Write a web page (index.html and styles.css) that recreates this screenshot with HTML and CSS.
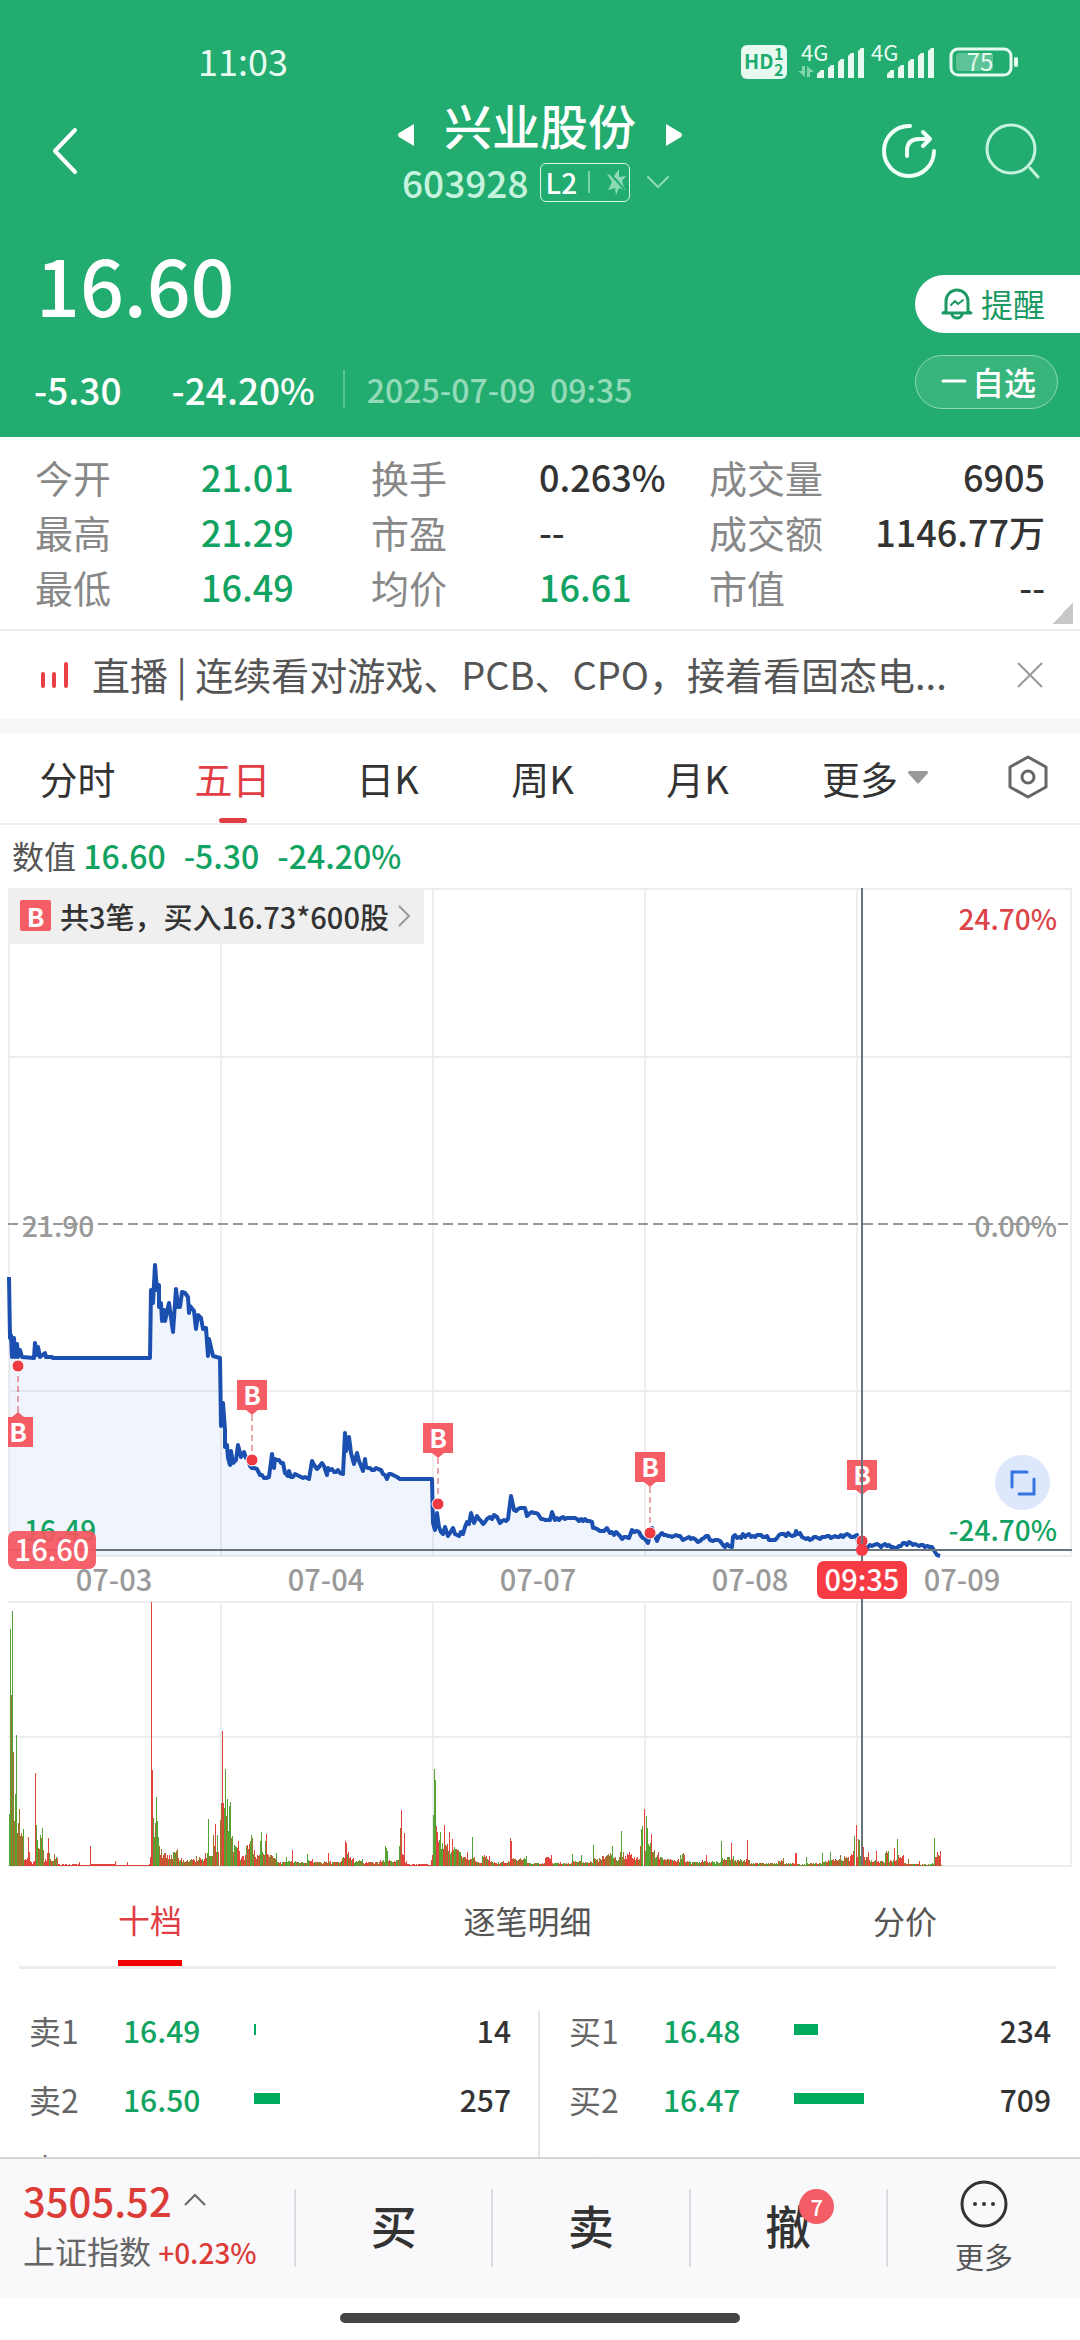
FILE: index.html
```html
<!DOCTYPE html>
<html lang="zh-CN">
<head>
  <meta charset="UTF-8" />
  <meta name="viewport" content="width=device-width, initial-scale=1.0"/>
  <title>兴业股份 603928</title>
  <link rel="stylesheet" href="styles.css">
</head>
<body>
  <main class="page">
    <header class="header">
      <div class="status-bar">
        <span class="clock">11:03</span>
        <svg class="status-icons" viewBox="0 0 280 36" width="280" height="36">
          <rect x="1" y="1" width="46" height="34" rx="6" fill="#e6faf0"/>
          <g fill="#22ac70" font-weight="700">
            <text x="4" y="25" font-size="20">HD</text>
            <text x="34" y="16" font-size="16">1</text>
            <text x="34" y="32" font-size="16">2</text>
          </g>
          <g fill="#e6faf0">
            <text x="61" y="17" font-size="22">4G</text>
            <text x="131" y="17" font-size="22">4G</text>
            <path d="M77 34v-4l4-4h3v8zM88 34v-10l3-3h3v13zM98 34v-16l3-3h3v19zM108 34v-22l3-3h3v25zM118 34v-27l3-3h3v30z"/>
            <path d="M147 34v-4l4-4h3v8zM158 34v-10l3-3h3v13zM168 34v-16l3-3h3v19zM178 34v-22l3-3h3v25zM188 34v-27l3-3h3v30z"/>
            <path d="M62 22h3v11l-7-6h4zM67 33v-11l7 6h-4v5z" opacity="0.5"/>
            <rect x="216" y="9" width="37" height="18" rx="3" opacity="0.3"/>
            <rect x="274" y="13" width="4" height="10" rx="2"/>
            <text x="240" y="27" font-size="24" text-anchor="middle">75</text>
          </g>
          <rect x="211" y="5" width="60" height="26" rx="7" fill="none" stroke="#e6faf0" stroke-width="3"/>
        </svg>
      </div>

      <nav class="nav-bar">
        <button class="icon-button back" aria-label="返回">
          <svg viewBox="0 0 26 46" width="26" height="46"><path d="M23 2L3 23l20 21" fill="none" stroke="#fff" stroke-width="4" stroke-linecap="round" stroke-linejoin="round"/></svg>
        </button>
        <div class="nav-title">
          <div class="stock-name">
            <button class="icon-button" aria-label="上一只">
              <svg viewBox="0 0 16 22" width="16" height="22"><path d="M16 0v22L1 13q-2-2 0-4z" fill="#fff"/></svg>
            </button>
            <h1>兴业股份</h1>
            <button class="icon-button" aria-label="下一只">
              <svg viewBox="0 0 16 22" width="16" height="22"><path d="M0 0v22l15-9q2-2 0-4z" fill="#fff"/></svg>
            </button>
          </div>
          <div class="stock-code">
            <span class="code">603928</span>
            <span class="level">
              L2
              <svg viewBox="0 0 44 28" width="44" height="28"><path d="M4 3v22" stroke="#d5f5e5" stroke-width="1"/><path d="M34 1l-5 7-7-2 5 8-4 8 7-2 1 7 3-7 6 2-3-9 4-5-7 1z" fill="#8edab6"/><path d="M22 2l17 19" stroke="#22ac70" stroke-width="2"/></svg>
            </span>
            <svg viewBox="0 0 24 14" width="24" height="14"><path d="M2 2l10 10L22 2" fill="none" stroke="#8edab6" stroke-width="2" stroke-linecap="round"/></svg>
          </div>
        </div>
        <div class="nav-actions">
          <button class="icon-button" aria-label="分享">
            <svg viewBox="0 0 56 56" width="56" height="56" fill="none" stroke="#f0fff8" stroke-width="4" stroke-linecap="round" stroke-linejoin="round"><path d="M29 3A25 25 0 1 0 53 28"/><path d="M26 33v-5q0-12 12-12h10M42 9l7 7-7 7"/></svg>
          </button>
          <button class="icon-button" aria-label="搜索">
            <svg viewBox="0 0 56 56" width="56" height="56" fill="none" stroke="#c6f3dd" stroke-width="3" stroke-linecap="round"><circle cx="26" cy="26" r="24"/><path d="M45 45l8 9"/></svg>
          </button>
        </div>
      </nav>

      <div class="quote">
        <div class="quote-left">
          <div class="price">16.60</div>
          <div class="change">
            <span>-5.30</span>
            <span>-24.20%</span>
            <time>2025-07-09&nbsp; 09:35</time>
          </div>
        </div>
        <div class="quote-actions">
          <button class="remind">
            <svg viewBox="0 0 32 32" width="32" height="32" fill="none" stroke="#1d9a64" stroke-width="3" stroke-linejoin="round" stroke-linecap="round"><path d="M5 25V14a11 11 0 0 1 22 0v11l3 1H2z"/><path d="M11 27a5 4 0 0 0 10 0"/><path d="M10 18l4-4 3 3 5-4" stroke-width="2"/></svg>
            提醒
          </button>
          <button class="favorite">
            <svg viewBox="0 0 26 4" width="26" height="4"><path d="M2 2h22" stroke="#fff" stroke-width="3" stroke-linecap="round"/></svg>
            自选
          </button>
        </div>
      </div>
    </header>

    <section class="stats">
      <dl>
        <dt>今开</dt><dd class="down">21.01</dd>
        <dt>换手</dt><dd>0.263%</dd>
        <dt>成交量</dt><dd>6905</dd>
        <dt>最高</dt><dd class="down">21.29</dd>
        <dt>市盈</dt><dd>--</dd>
        <dt>成交额</dt><dd>1146.77万</dd>
        <dt>最低</dt><dd class="down">16.49</dd>
        <dt>均价</dt><dd class="down">16.61</dd>
        <dt>市值</dt><dd>--</dd>
      </dl>
    </section>

    <section class="ticker">
      <svg viewBox="0 0 28 26" width="28" height="26"><path d="M2 12v12M13 12v12M25 2v22" stroke="#ea3f44" stroke-width="4" stroke-linecap="round"/></svg>
      <a href="#live">直播 | 连续看对游戏、PCB、CPO，接着看固态电...</a>
      <button class="icon-button" aria-label="关闭">
        <svg viewBox="0 0 26 26" width="26" height="26"><path d="M1 1l24 24M25 1L1 25" stroke="#999" stroke-width="2"/></svg>
      </button>
    </section>

    <nav class="period-tabs">
      <button>分时</button>
      <button class="active">五日</button>
      <button>日K</button>
      <button>周K</button>
      <button>月K</button>
      <button>更多 <svg viewBox="0 0 20 13" width="20" height="13"><path d="M1 0h18q1 0 1 2l-9 10q-1 1-2 0L0 2q0-2 1-2z" fill="#999"/></svg></button>
      <button aria-label="设置">
        <svg viewBox="0 0 42 44" width="42" height="44" fill="none" stroke="#666" stroke-width="3" stroke-linejoin="round"><path d="M21 2l18 10v20L21 42 3 32V12z"/><circle cx="21" cy="22" r="6"/></svg>
      </button>
    </nav>

    <section class="chart">
      <p class="chart-values">数值 <span>16.60</span><span>-5.30</span><span>-24.20%</span></p>
      <div class="chart-area">
        <svg class="chart-svg" viewBox="0 0 1080 1000">
          <g class="grid">
            <path d="M8 9H1072M8 177H1072M8 511H1072M8 676H1072M9 9V676M221 9V676M433 9V676M645 9V676M857 9V676M1071 9V676"/>
            <path d="M8 722H1072M8 857H1072M8 986H1072M221 722V986M433 722V986M645 722V986M857 722V986M1071 722V986"/>
          </g>
          <path class="base-line" d="M8 344H1068"/>
          <path class="price-fill" id="priceFill"/>
          <path class="price-line" id="priceLine"/>
          <g id="volume"></g>
          <g id="trades"></g>
          <g class="axis">
            <text x="22" y="357">21.90</text>
            <text x="1057" y="357" class="end">0.00%</text>
            <text x="1057" y="50" class="end up">24.70%</text>
            <text x="1057" y="661" class="end down">-24.70%</text>
            <text x="24" y="661" class="down">16.49</text>
            <text x="114" y="711" class="mid">07-03</text>
            <text x="326" y="711" class="mid">07-04</text>
            <text x="538" y="711" class="mid">07-07</text>
            <text x="750" y="711" class="mid">07-08</text>
            <text x="962" y="711" class="mid">07-09</text>
          </g>
          <path class="cross" d="M8 670H1072M862 8V986"/>
          <circle cx="862" cy="670" r="6" fill="#f73b45"/>
          <rect x="8" y="651" width="88" height="38" rx="7" fill="#f55660" opacity="0.93"/>
          <text class="tag" x="52" y="681">16.60</text>
          <rect x="817" y="681" width="90" height="38" rx="7" fill="#f73b45"/>
          <text class="tag" x="862" y="711">09:35</text>
        </svg>
        <button class="trade-summary">
          <b>B</b> 共3笔，买入16.73*600股
          <svg viewBox="0 0 12 22" width="12" height="22"><path d="M1 1l10 10L1 21" fill="none" stroke="#999" stroke-width="2"/></svg>
        </button>
        <button class="expand" aria-label="全屏">
          <svg viewBox="0 0 26 26" width="26" height="26" fill="none" stroke="#3575e2" stroke-width="3" stroke-linecap="round"><path d="M2 17V2h15M9 24h15V9"/></svg>
        </button>
      </div>
    </section>

    <nav class="depth-tabs">
      <button class="active">十档</button>
      <button>逐笔明细</button>
      <button>分价</button>
    </nav>

    <section class="depth">
      <table>
        <tr><th>卖1</th><td class="down">16.49</td><td><i style="width: 2px"></i></td><td>14</td></tr>
        <tr><th>卖2</th><td class="down">16.50</td><td><i style="width: 26px"></i></td><td>257</td></tr>
        <tr><th>卖3</th><td class="down">16.51</td><td><i style="width: 8px"></i></td><td>80</td></tr>
      </table>
      <table>
        <tr><th>买1</th><td class="down">16.48</td><td><i style="width: 24px"></i></td><td>234</td></tr>
        <tr><th>买2</th><td class="down">16.47</td><td><i style="width: 70px"></i></td><td>709</td></tr>
        <tr><th>买3</th><td class="down">16.46</td><td><i style="width: 12px"></i></td><td>120</td></tr>
      </table>
    </section>
  </main>

  <footer class="bottom">
    <div class="trade-bar">
      <a class="index" href="#index">
        <span class="index-value">3505.52 <svg viewBox="0 0 22 14" width="22" height="14"><path d="M1 12L11 2l10 10" fill="none" stroke="#666" stroke-width="2"/></svg></span>
        <span class="index-name">上证指数 <em>+0.23%</em></span>
      </a>
      <button>买</button>
      <button>卖</button>
      <button><span class="cancel">撤<span class="badge">7</span></span></button>
      <button class="more">
        <svg viewBox="0 0 48 48" width="48" height="48"><circle cx="24" cy="24" r="22" fill="none" stroke="#333" stroke-width="3"/><g fill="#333"><circle cx="15" cy="24" r="2"/><circle cx="24" cy="24" r="2"/><circle cx="33" cy="24" r="2"/></g></svg>
        更多
      </button>
    </div>
    <div class="home-bar"></div>
  </footer>

  <script src="script.js"></script>
</body>
</html>
```
FILE: styles.css
```css
* {
  box-sizing: border-box;
}

body {
  font-family: 'Noto Sans CJK SC', 'Noto Sans', sans-serif;
  background: #fff;
  color: #333;
  margin: 0;
  height: 100vh;
  display: flex;
  flex-direction: column;
  font-size: 32px;
}

button {
  font-family: inherit;
  font-size: inherit;
  color: inherit;
  background: none;
  border: none;
  padding: 0;
  cursor: pointer;
}

svg {
  display: block;
  flex: none;
  overflow: visible;
}

a {
  color: inherit;
  text-decoration: none;
}

.page {
  flex: 1;
  min-height: 0;
  overflow: hidden auto;
  scrollbar-width: none;
}

.icon-button {
  display: flex;
  align-items: center;
  justify-content: center;
}

.up {
  color: #dc4449;
  fill: #dc4449;
}

.down {
  color: #12a362;
  fill: #12a362;
}

/* Cabecera verde */
.header {
  background: #22ac70;
  color: #fff;
  height: 437px;
  padding-top: 44px;
}

.status-bar {
  display: flex;
  justify-content: space-between;
  align-items: center;
  height: 36px;
  padding: 0 60px 0 198px;
}

.clock {
  font-size: 36px;
  line-height: 36px;
  padding-bottom: 4px;
  color: #e6faf0;
}

.nav-bar {
  display: grid;
  grid-template-columns: 1fr auto 1fr;
  align-items: center;
  margin-top: 16px;
}

.back {
  margin-left: 52px;
  justify-self: start;
}

.stock-name {
  display: flex;
  align-items: center;
  justify-content: space-between;
  width: 284px;
  height: 62px;
}

.stock-name h1 {
  margin: 0;
  padding-bottom: 6px;
  font-size: 48px;
  font-weight: 500;
  line-height: 62px;
}

.stock-name .icon-button {
  padding-top: 16px;
}

.stock-code {
  display: flex;
  align-items: center;
  height: 48px;
  padding-left: 4px;
}

.code {
  font-size: 37px;
  color: #c6f3dd;
  font-weight: 500;
}

.level {
  display: flex;
  align-items: center;
  gap: 8px;
  height: 39px;
  border: 1px solid #d5f5e5;
  border-radius: 6px;
  padding: 0 0 0 5px;
  margin: 0 16px 0 11px;
  font-size: 28px;
  font-weight: 500;
}

.nav-actions {
  display: flex;
  justify-content: flex-end;
  gap: 48px;
  padding-right: 39px;
}

.quote {
  display: flex;
  justify-content: space-between;
  margin-top: 28px;
}

.price {
  font-size: 77px;
  font-weight: 500;
  line-height: 100px;
  padding-left: 36px;
}

.change {
  display: flex;
  align-items: center;
  height: 38px;
  margin-top: 36px;
  padding-left: 34px;
  gap: 50px;
  font-size: 37px;
  font-weight: 500;
}

.change time {
  border-left: 2px solid #5cc596;
  line-height: 38px;
  margin-left: -22px;
  padding-left: 22px;
  font-size: 32px;
  color: #93dab9;
}

.quote-actions {
  display: flex;
  flex-direction: column;
  gap: 22px;
  padding-top: 41px;
}

.remind, .favorite {
  display: flex;
  align-items: center;
  line-height: 40px;
}

.remind {
  width: 165px;
  height: 58px;
  gap: 8px;
  padding: 0 0 3px 26px;
  border-radius: 29px 0 0 29px;
  background: #fff;
  color: #1d9a64;
}

.favorite {
  width: 143px;
  height: 54px;
  gap: 5px;
  padding: 0 0 2px 25px;
  border: 1px solid #90d8b7;
  border-radius: 27px;
  background: #38b47d;
  font-weight: 500;
}

/* Datos del valor */
.stats {
  position: relative;
  height: 194px;
  padding: 12px 35px 0;
  border-bottom: 2px solid #eee;
}

.stats::after {
  content: "";
  position: absolute;
  right: 7px;
  bottom: 5px;
  width: 20px;
  height: 22px;
  background: linear-gradient(to bottom right, transparent 50%, #c8c8c8 50%);
}

.stats dl {
  display: grid;
  grid-template-columns: 166px 170px 168px 170px 126px 1fr;
  grid-auto-rows: 55px;
  align-items: center;
  margin: 0;
}

.stats dt {
  font-size: 38px;
  line-height: 55px;
  color: #888;
  white-space: nowrap;
}

.stats dd {
  margin: 0;
  font-size: 36px;
  line-height: 55px;
  font-weight: 500;
  white-space: nowrap;
}

.stats dd:nth-of-type(3n) {
  text-align: right;
}

.ticker {
  display: flex;
  align-items: center;
  height: 102px;
  padding: 0 37px 0 41px;
  border-bottom: 14px solid #f7f7f7;
  font-size: 38px;
  color: #555;
}

.ticker a {
  flex: 1;
  margin: 0 20px 0 23px;
  padding-bottom: 2px;
  line-height: 56px;
  overflow: hidden;
  text-overflow: ellipsis;
  white-space: nowrap;
}

.period-tabs {
  display: grid;
  grid-template-columns: repeat(5, 1fr) 200px 105px;
  height: 92px;
  border-bottom: 2px solid #eee;
  font-size: 38px;
}

.period-tabs button {
  position: relative;
  display: flex;
  align-items: center;
  justify-content: center;
  gap: 10px;
  padding-bottom: 2px;
}

.period-tabs .active {
  color: #e23c44;
}

.period-tabs .active::after {
  content: "";
  position: absolute;
  left: 50%;
  bottom: 0;
  width: 28px;
  height: 5px;
  margin-left: -14px;
  border-radius: 3px;
  background: #e23c44;
}

/* Grafico */
.chart-values {
  height: 55px;
  margin: 0;
  padding: 7px 12px 0;
  line-height: 47px;
  color: #555;
}

.chart-values span {
  margin-right: 18px;
  font-weight: 500;
  color: #12a362;
}

.chart-area {
  position: relative;
}

.chart-svg {
  width: 100%;
  height: auto;
}

.grid {
  fill: none;
  stroke: #eee;
  stroke-width: 2;
}

.base-line {
  stroke: #999;
  stroke-width: 2;
  stroke-dasharray: 10 5;
}

.price-fill {
  fill: rgba(60, 120, 235, 0.08);
}

.price-line {
  fill: none;
  stroke: #1b50b0;
  stroke-width: 4;
  stroke-linejoin: round;
}

.cross {
  stroke: #6b747c;
  stroke-width: 2;
}

.axis {
  font-size: 28px;
  font-weight: 500;
}

.axis text {
  fill: #999;
}

.axis .up {
  fill: #dc4449;
}

.axis .down {
  fill: #12a362;
}

.axis .end {
  text-anchor: end;
}

.axis .mid, .tag, .trade text {
  text-anchor: middle;
}

.axis .mid {
  font-size: 29px;
}

.tag {
  fill: #fff;
  font-size: 29px;
  font-weight: 500;
}

.trade text {
  fill: #fff;
  font-size: 26px;
  font-weight: 700;
}

.trade-summary {
  position: absolute;
  top: 10px;
  left: 8px;
  display: flex;
  align-items: center;
  height: 54px;
  padding: 0 14px 3px 12px;
  gap: 9px;
  background: #efefef;
  font-size: 29px;
  font-weight: 500;
}

.trade-summary b {
  width: 31px;
  line-height: 31px;
  border-radius: 2px;
  background: #f55d66;
  color: #fff;
  font-size: 26px;
}

.expand {
  position: absolute;
  right: 30px;
  top: 575px;
  display: flex;
  align-items: center;
  justify-content: center;
  width: 55px;
  height: 55px;
  border-radius: 50%;
  background: #dde8fc;
}

/* Diez niveles */
.depth-tabs {
  display: flex;
  justify-content: space-between;
  height: 89px;
  margin: 0 24px 0 19px;
  padding: 0 119px 0 99px;
  border-bottom: 3px solid #ececec;
  color: #555;
}

.depth-tabs button {
  border-bottom: 6px solid transparent;
}

.depth-tabs .active {
  padding-bottom: 3px;
  color: #e23c44;
  border-color: #f00000;
}

.depth {
  display: grid;
  grid-template-columns: 1fr 1fr;
  padding-top: 26px;
  position: relative;
}

.depth::after {
  content: "";
  position: absolute;
  left: 50%;
  top: 42px;
  bottom: 0;
  width: 2px;
  margin-left: -2px;
  background: #e4e4e4;
}

.depth table {
  width: 100%;
  padding: 0 29px;
  border-spacing: 0;
  table-layout: fixed;
}

.depth tr {
  height: 69px;
}

.depth th, .depth td {
  padding: 0;
  text-align: left;
  line-height: 40px;
}

.depth th {
  width: 94px;
  font-weight: 400;
  color: #666;
}

.depth td {
  font-size: 30px;
  font-weight: 500;
}

.depth td:nth-child(2) {
  width: 131px;
}

.depth td:last-child {
  width: 90px;
  text-align: right;
}

.depth i {
  display: block;
  height: 11px;
  background: #00ab5e;
}

/* Barra inferior */
.bottom {
  position: relative;
  flex: none;
  background: #fff;
}

.trade-bar {
  display: grid;
  grid-template-columns: 294px 1fr 1fr 1fr 194px;
  align-items: center;
  height: 140px;
  border-top: 2px solid #d4d4d8;
  background: #f9f9fc;
}

.trade-bar button {
  height: 78px;
  padding-bottom: 8px;
  border-left: 2px solid #dcdce0;
  font-size: 46px;
  font-weight: 500;
  line-height: 70px;
}

.index {
  padding: 0 0 4px 23px;
  line-height: 50px;
}

.index-value {
  display: flex;
  align-items: center;
  gap: 12px;
  font-size: 40px;
  font-weight: 500;
  color: #dc3c38;
}

.index-name {
  color: #666;
  white-space: nowrap;
}

.index-name em {
  font-style: normal;
  font-size: 28px;
  font-weight: 500;
  color: #dc3c38;
}

.cancel {
  position: relative;
}

.badge {
  position: absolute;
  right: -23px;
  top: -2px;
  width: 35px;
  height: 35px;
  border-radius: 50%;
  background: #f55d66;
  color: #fff;
  font-size: 22px;
  line-height: 35px;
}

.trade-bar .more {
  display: flex;
  flex-direction: column;
  align-items: center;
  justify-content: center;
  gap: 8px;
  padding-bottom: 0;
  font-size: 29px;
  font-weight: 400;
  line-height: 40px;
  color: #555;
}

.home-bar {
  width: 37%;
  height: 10px;
  margin: 16px auto 17px;
  border-radius: 5px;
  background: #454545;
}
```
FILE: script.js
```js
const SVG_NS = 'http://www.w3.org/2000/svg';

// puntos [x, y] de la linea de precio
const price = [
  [9,397],[10,458],[11,455],[12,477],[14,458],[15,477],[17,464],[18,477],[20,470],[22,477],[34,478],[35,463],[37,475],[38,467],[40,477],[45,473],[46,477],[52,477],[53,478],[150,478],
  [151,410],[153,423],[155,385],[157,410],[159,405],[159,427],[161,423],[162,441],[164,430],[165,441],[169,423],[173,452],[176,409],[178,427],[180,427],[182,412],[185,413],[188,417],[189,433],[190,426],[194,431],[196,449],[198,435],[201,438],[203,449],[206,448],[208,476],[209,459],[213,476],[220,478],
  [221,546],[223,523],[225,550],[225,567],[227,565],[228,578],[230,585],[231,571],[233,583],[236,580],[238,565],[241,577],[244,572],[246,578],[252,588],[257,589],[260,595],[266,598],[269,597],[272,574],[274,588],[275,579],[283,583],[285,593],[288,596],[289,591],[291,597],[295,594],[309,599],[312,581],[317,589],[322,583],[327,595],[328,588],[343,594],[345,553],[346,571],[349,557],[351,573],[354,584],[357,573],[363,591],[365,579],[366,587],[381,590],[387,599],[389,594],[400,599],[432,599],
  [433,643],[435,650],[437,633],[439,647],[443,654],[445,647],[448,656],[453,648],[455,654],[463,654],[467,642],[469,644],[471,633],[474,643],[477,636],[483,644],[490,637],[497,637],[500,643],[508,639],[511,616],[514,630],[525,628],[527,636],[530,633],[538,634],[541,639],[550,640],[552,632],[555,640],[563,637],[575,638],[592,642],[593,648],[600,651],[607,648],[610,653],[618,654],[622,659],[629,658],[632,650],[637,651],[643,658],
  [648,663],[652,648],[657,661],[662,653],[678,656],[683,660],[693,658],[698,662],[706,656],[713,661],[718,660],[723,665],[732,667],[733,657],[747,655],[765,657],[773,660],[784,654],[795,655],[796,651],[798,654],[808,658],[825,657],[857,655],
  [858,663],[868,667],[877,664],[897,668],[903,663],[917,665],[930,667],[935,672],[940,676]
];

// volumen [x, alto, color]
const volume = [
  [9,52,'g'],[10,237,'g'],[11,171,'b'],[12,255,'g'],[13,114,'b'],[14,45,'b'],[15,72,'g'],[16,131,'g'],[17,33,'b'],[18,43,'b'],[19,57,'b'],[20,30,'b'],[22,30,'b'],[23,37,'g'],[24,6,'r'],[27,8,'r'],[28,29,'r'],[29,14,'r'],[31,4,'r'],[34,5,'r'],[35,93,'r'],[36,41,'g'],[37,26,'g'],[38,18,'b'],[40,31,'g'],[41,28,'b'],[42,38,'g'],[43,16],[45,7],[47,13],[48,28,'r'],[49,13],[50,7],[54,12],[57,8,'r'],[58,2,'r'],[79,4,'r'],[80,1,'r'],[90,20,'r'],[91,2,'r'],[115,5,'r'],[116,1,'r'],[127,4,'r'],[130,1,'r'],[149,2,'r'],
  [150,9,'r'],[151,264,'r'],[152,96,'r'],[153,48,'g'],[154,29,'g'],[155,43],[156,69,'g'],[157,45,'g'],[158,29,'g'],[159,20],[161,17],[165,13],[169,11,'r'],[173,14,'g'],[177,17],[181,8],[190,6],[196,10],[200,8],[205,13],[208,47,'g'],[209,10],[213,31,'b'],[214,20],[215,42,'r'],[216,14],[217,31,'g'],[218,14,'r'],[219,0],
  [220,46,'b'],[221,63,'b'],[222,135,'r'],[223,63,'r'],[224,58,'g'],[225,97,'g'],[226,50,'b'],[227,67,'g'],[228,35],[229,60,'g'],[230,64,'g'],[231,28],[232,30,'g'],[235,20],[238,25,'r'],[239,15],[243,10],[246,20,'g'],[250,25,'g'],[251,31,'g'],[252,28],[254,16,'r'],[258,10],[260,25,'g'],[261,34,'g'],[262,14,'g'],[265,25,'g'],[266,32,'r'],[267,12,'r'],[272,10],[276,13],[280,4],[286,9,'g'],[289,5],[292,16,'r'],[296,4],[307,12],[312,7,'r'],[318,4],[328,13,'r'],[332,4],[342,8],[345,25,'r'],[346,23],[348,14],[353,8],[358,5],[362,7],[370,4],[380,6,'r'],[385,20,'g'],[387,15,'g'],[390,5],[398,6],[399,20],[400,38,'b'],[401,56,'r'],[402,12,'r'],[404,33,'r'],[406,5,'r'],[412,2,'r'],[425,2,'r'],[431,6,'r'],[432,11],
  [433,51,'g'],[434,97,'g'],[435,86,'g'],[436,40,'r'],[437,34,'r'],[439,26,'g'],[440,34,'g'],[442,23],[444,41,'r'],[446,20],[449,34,'r'],[451,14],[452,27,'r'],[455,17],[460,14],[463,9],[467,14,'r'],[469,6],[472,29,'g'],[474,9],[478,4],[482,10],[489,10,'r'],[492,4],[510,28,'r'],[511,25,'r'],[512,7],[526,10,'g'],[530,3],[545,8,'r'],[551,11,'r'],[555,3],[572,12,'g'],[576,4],[581,11,'g'],[585,4],[593,21,'g'],[595,7],[602,10],[608,12],[612,20,'g'],[614,8],[620,14],[621,35,'g'],[623,14],[627,12,'r'],[631,12,'r'],[636,8],[640,20],
  [641,37,'g'],[642,40,'g'],[643,0],[644,57,'r'],[645,15,'g'],[646,50,'g'],[647,38,'g'],[649,20],[651,32,'r'],[653,14],[658,14,'r'],[662,8],[672,6],[680,11,'g'],[684,11,'r'],[690,4],[702,6],[706,11,'r'],[711,4],[720,4],[721,25,'g'],[722,8],[731,23,'r'],[733,10],[738,6],[747,26,'r'],[749,6],[756,3,'r'],[766,3],[778,5,'r'],[783,8],[788,3],[795,13,'r'],[796,13,'r'],[798,2],[806,9,'g'],[810,3],[822,13,'g'],[825,5],[830,14,'g'],[832,6],[840,11],[845,8],[850,10,'r'],[853,15,'r'],
  [854,30,'g'],[855,0],[856,41,'r'],[857,9,'r'],[858,27],[859,26],[860,10],[863,19,'r'],[864,9],[868,14],[871,6],[876,15],[880,5],[885,13],[888,15,'g'],[890,6],[894,18,'r'],[895,5],[897,27,'g'],[898,11,'r'],[903,11,'r'],[905,3],[908,7],[912,2],[919,5],[922,2],[932,3,'g'],[934,28,'g'],[935,9],[937,14],[939,10],[940,15,'r'],[941,1]
];

// operaciones: x, borde superior de la etiqueta, y del punto
const trades = [
  { x: 18, top: 537, dot: 486 },
  { x: 252, top: 500, dot: 580 },
  { x: 438, top: 543, dot: 624 },
  { x: 650, top: 572, dot: 653 },
  { x: 862, top: 580, dot: 661 }
];

const colors = { r: '#e2433b', g: '#55a433', b: '#a1702d' };

let seed = 7;
function random() {
  seed = (seed * 16807) % 2147483647;
  return seed / 2147483647;
}

function addElement(parent, tag, attrs) {
  const el = document.createElementNS(SVG_NS, tag);
  for (const key in attrs) el.setAttribute(key, attrs[key]);
  parent.appendChild(el);
  return el;
}

function drawPrice() {
  const points = [];
  price.forEach(([x, y], i) => {
    points.push([x, y]);
    const next = price[i + 1];
    if (!next || x < 224 || (y === 599 && next[1] === 599)) return;
    for (let px = x + 2; px < next[0] - 1; px += 2) {
      const mid = y + (next[1] - y) * (px - x) / (next[0] - x);
      points.push([px, Math.round(mid + random() * 4 - 2)]);
    }
  });
  document.getElementById('priceLine').setAttribute('d', 'M' + points.join('L'));
  const filled = points.filter(p => p[0] <= 862);
  document.getElementById('priceFill').setAttribute('d', 'M9 676L' + filled.join('L') + 'V676Z');
}

function drawVolume() {
  const paths = { r: '', g: '', b: '' };
  const bar = (x, h, c) => { if (h > 0) paths[c] += `M${x} 986v${-h}h1v${h}z`; };
  const anyColor = () => 'rgb'[Math.floor(random() * 3)];
  volume.forEach(([x, h, c], i) => {
    bar(x, h, c || anyColor());
    const next = volume[i + 1];
    if (!next) return;
    for (let px = x + 1; px < next[0]; px++) {
      const gap = Math.min(h, next[1]) * (0.6 + random() * 0.6);
      bar(px, Math.max(1, Math.round(gap)), c === 'r' && next[2] === 'r' ? 'r' : anyColor());
    }
  });
  for (const c in paths) {
    addElement(document.getElementById('volume'), 'path', { d: paths[c], fill: colors[c] });
  }
}

function drawTrades() {
  trades.forEach(({ x, top, dot }) => {
    const g = addElement(document.getElementById('trades'), 'g', { class: 'trade' });
    const left = Math.max(8, x - 15);
    const up = dot < top;
    const edge = up ? top : top + 30;
    const tip = up ? top - 5 : top + 35;
    addElement(g, 'path', { d: `M${x} ${tip}V${dot}`, stroke: '#d04a55', 'stroke-dasharray': '6 4' });
    addElement(g, 'path', {
      d: `M${left} ${top}H${x + 15}V${top + 30}H${left}ZM${x - 6} ${edge}L${x} ${tip}L${x + 6} ${edge}Z`,
      fill: '#f55d66'
    });
    addElement(g, 'circle', { cx: x, cy: dot, r: 6, fill: '#ee3a42', stroke: '#fff', 'stroke-width': 1 });
    addElement(g, 'text', { x: x, y: top + 25 }).textContent = 'B';
  });
}

drawPrice();
drawVolume();
drawTrades();
```
